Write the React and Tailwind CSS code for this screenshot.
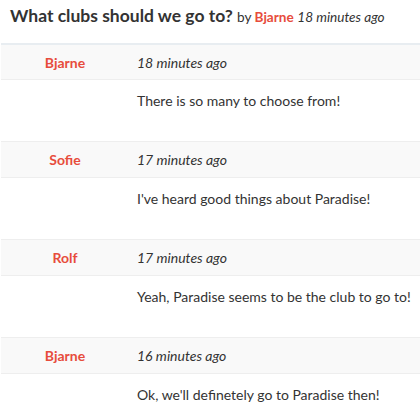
import React from "react";

const posts = [
  { name: "Bjarne", time: "18 minutes ago", text: "There is so many to choose from!" },
  { name: "Sofie", time: "17 minutes ago", text: "I've heard good things about Paradise!" },
  { name: "Rolf", time: "17 minutes ago", text: "Yeah, Paradise seems to be the club to go to!" },
  { name: "Bjarne", time: "16 minutes ago", text: "Ok, we'll definetely go to Paradise then!" },
];

export default function App() {
  return (
    <div className="w-[420px] h-[413px] overflow-hidden bg-white text-[#333] font-['Lato','Noto_Sans',sans-serif]">
      <div className="pl-[10px] pt-[4px] h-[43px] flex items-start">
        <h1 className="text-[17.5px] leading-[24px] font-bold whitespace-nowrap">
          What clubs should we go to?{" "}
          <span className="text-[13.6px] font-normal">
            by <span className="text-[#e74c3c] font-bold">Bjarne</span>{" "}
            <em>18 minutes ago</em>
          </span>
        </h1>
      </div>
      <div className="ml-[1px]">
        {posts.map((p, i) => (
          <div key={i}>
            <div
              className={`flex h-[37px] pt-[1px] bg-[#f9f9f9] border-b border-[#eeeeee] ${
                i === 0 ? "border-t-2 border-t-[#e8edf1]" : "border-t border-t-[#eeeeee]"
              }`}
            >
              <div className="w-[128px] flex items-center justify-center text-[14px] leading-[20px] font-bold text-[#e74c3c]">
                {p.name}
              </div>
              <div className="pl-[8px] flex items-center text-[14px] leading-[20px] italic">
                {p.time}
              </div>
            </div>
            <div className="h-[61px] flex">
              <div className="w-[128px]" />
              <div className="pl-[8px] pt-[11px] text-[14px] leading-[20px]">{p.text}</div>
            </div>
          </div>
        ))}
      </div>
    </div>
  );
}
